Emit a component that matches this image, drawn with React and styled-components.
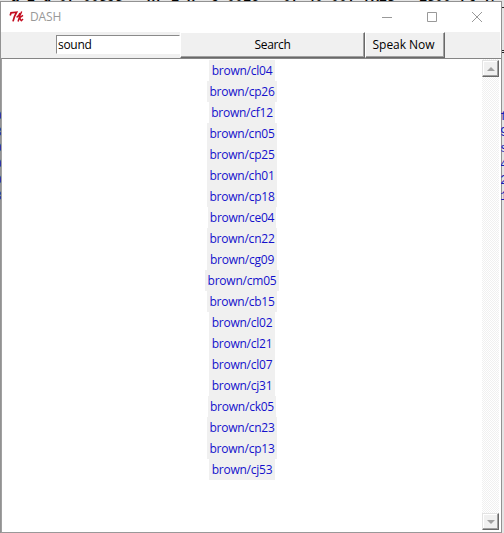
import React from 'react';
import styled, { createGlobalStyle } from 'styled-components';

const Global = createGlobalStyle`
  * { box-sizing: border-box; }
  body { margin: 0; background: #e4e4e4; overflow: hidden; }
`;
const Desktop = styled.div`
  width: 504px; height: 533px; position: relative; overflow: hidden;
  background: #e4e4e4;
  font: 12px/16px "Open Sans", "Noto Sans", sans-serif; color: #000;
`;
const Terminal = styled.div`
  position: absolute; left: 11px; top: -10px; white-space: pre;
  font: bold 13.33px/16px "Liberation Mono", monospace;
`;
const Edge = styled.div`
  position: absolute; top: 109px; left: ${p => p.$left}px; width: ${p => p.$width}px;
  overflow: hidden; color: #1c1cb4; font: 13px/16px "Liberation Mono", monospace;
`;
const EdgeLine = styled.div`
  margin-left: ${p => p.$offset}px; height: 16px;
`;
const EdgeRule = styled.div`
  position: absolute; left: 502px; top: ${p => p.$top}px; width: 2px; height: 1px; background: #222;
`;
const Window = styled.div`
  position: relative; width: 502px; height: 532px; margin-top: 1px; background: #fff;
  border: 1px solid #929292; border-bottom: 0; display: flex; flex-direction: column;
`;
const TitleBar = styled.div`
  height: 30px; flex: none; display: flex; align-items: center; padding: 0 2px 0 8px; color: #999;
`;
const Title = styled.span`
  flex: 1; margin-left: 5px; font-size: 12px; letter-spacing: -0.15px;
`;
const Control = styled.div`
  width: 45px; height: 28px; display: flex; align-items: center; justify-content: center;
`;
const Toolbar = styled.div`
  height: 26px; flex: none; display: flex; background: #f0f0f0; padding-left: 55px; margin-right: 1px;
`;
const Entry = styled.div`
  width: 124px; height: 19px; margin-top: 3px; background: #fff; padding-left: 1px;
  border: 1px solid #8a8a8a; border-right-color: #fff; border-bottom-color: #fff;
  line-height: 17px; letter-spacing: -0.3px;
`;
const Button = styled.div`
  width: ${p => p.$width}px; height: 26px; text-align: center; white-space: nowrap;
  line-height: 23px; letter-spacing: ${p => p.$tracking}px; padding-right: ${p => p.$shift || 0}px;
  border: 1px solid; border-color: #fff #696969 #696969 #fff;
  box-shadow: inset -1px -1px #a0a0a0;
`;
const Content = styled.div`
  flex: 1; display: flex; min-height: 0; border-top: 1px solid #858585; border-left: 1px solid #a0a0a0;
  border-bottom: 1px solid #999; padding-bottom: 2px;
`;
const Results = styled.div`
  flex: 1; display: flex; flex-direction: column; align-items: center; padding-top: 1px;
`;
const Result = styled.div`
  flex: none; width: ${p => p.$width}px; height: 21px; line-height: 21px; background: #f0f0f0;
  color: #1410cc; display: flex; justify-content: center; white-space: nowrap; letter-spacing: -0.23px;
`;
const Scrollbar = styled.div`
  width: 17px; margin-right: 2px; padding-top: 1px; display: flex; flex-direction: column; justify-content: space-between;
  background: repeating-conic-gradient(#f0f0f0 0 25%, #fff 0 50%) 0 0 / 2px 2px;
`;
const Arrow = styled.div`
  width: 17px; height: 17px; background: #f0f0f0; display: flex; align-items: center; justify-content: center;
  border: 1px solid; border-color: #e3e3e3 #696969 #696969 #e3e3e3;
  box-shadow: inset -1px -1px #a0a0a0, inset 1px 1px #fff;
`;

const names = ['cl04','cp26','cf12','cn05','cp25','ch01','cp18','ce04','cn22','cg09','cm05','cb15','cl02','cl21','cl07','cj31','ck05','cn23','cp13','cj53'];
const widths = { l: 66, j: 66, f: 66, m: 74, k: 68, e: 68 };

const TkLogo = () => (
  <svg width="16" height="16" viewBox="0 0 16 16" fill="none" stroke="#c40d20">
    <path d="M1.2 6.6 2 3.8 7.6 3.2Q5 7.5 4 12.3" strokeWidth="1.7" />
    <path d="M12.7 2.5Q10.8 6 9.1 12.5M7.6 8.4Q10 7 11 4M10 9.2 14 6.4M10.8 8.8Q11.5 11.5 12.3 11.7L14 10" strokeWidth="1.5" />
  </svg>
);

export default function App() {
  return (
    <Desktop>
      <Global />
      <Terminal>a 2 d 07 00595   x7 1 x  c 0016   07 40 00! fX23   1500 fl !/ 1XT</Terminal>
      <Window>
        <TitleBar>
          <TkLogo />
          <Title>DASH</Title>
          <Control><svg width="12" height="12" stroke="#999"><path d="M1 6.5H11" /></svg></Control>
          <Control><svg width="12" height="12" stroke="#999" fill="none"><path d="M1.5 1.5H10.5V10.5H1.5Z" /></svg></Control>
          <Control><svg width="12" height="12" stroke="#999"><path d="M1 1 11 11M11 1 1 11" /></svg></Control>
        </TitleBar>
        <Toolbar>
          <Entry>sound</Entry>
          <Button $width={185} $tracking={-0.35}>Search</Button>
          <Button $width={80} $tracking={-0.05} $shift={3}>Speak Now</Button>
        </Toolbar>
        <Content>
          <Results>
            {names.map(n => <Result key={n} $width={widths[n[1]] || 70}>brown/{n}</Result>)}
          </Results>
          <Scrollbar>
            <Arrow><svg width="8" height="4"><path d="M0 4 4 0 8 4Z" fill="#a0a0a0" /></svg></Arrow>
            <Arrow><svg width="8" height="4"><path d="M0 0H8L4 4Z" fill="#a0a0a0" /></svg></Arrow>
          </Scrollbar>
        </Content>
      </Window>
      <Edge $left={0} $width={1}>
        {['0', '8', '0', '0', '0', '8'].map((c, i) => <EdgeLine key={i} $offset={-6}>{c}</EdgeLine>)}
      </Edge>
      <Edge $left={501} $width={3}>
        {['f', '9', 's', '4', '2', '1'].map((c, i) => <EdgeLine key={i} $offset={-1}>{c}</EdgeLine>)}
      </Edge>
      <EdgeRule $top={7} /><EdgeRule $top={50} /><EdgeRule $top={52} />
    </Desktop>
  );
}
